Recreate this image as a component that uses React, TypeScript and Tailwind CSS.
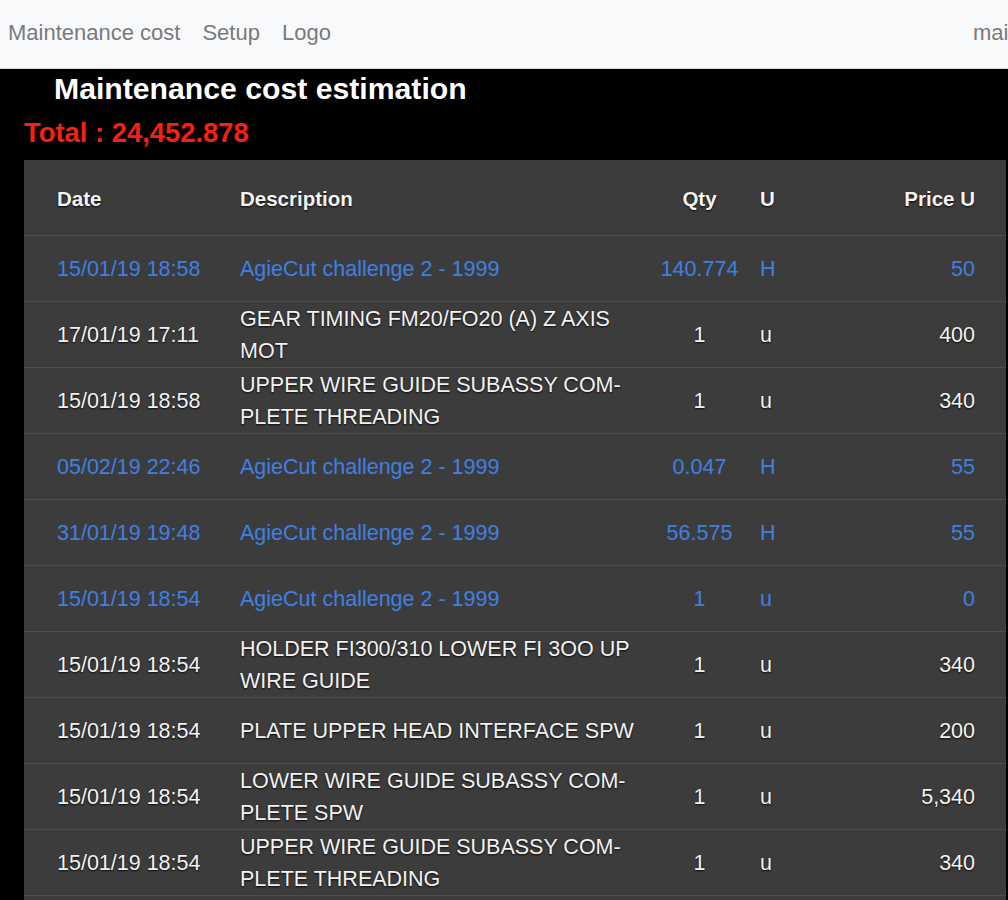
import React from "react";

type Row = {
  date: string;
  desc: React.ReactNode;
  qty: string;
  u: string;
  price: string;
  blue?: boolean;
};

const rows: Row[] = [
  { date: "15/01/19 18:58", desc: "AgieCut challenge 2 - 1999", qty: "140.774", u: "H", price: "50", blue: true },
  { date: "17/01/19 17:11", desc: "GEAR TIMING FM20/FO20 (A) Z AXIS MOT", qty: "1", u: "u", price: "400" },
  { date: "15/01/19 18:58", desc: "UPPER WIRE GUIDE SUBASSY COM\u00ADPLETE THREADING", qty: "1", u: "u", price: "340" },
  { date: "05/02/19 22:46", desc: "AgieCut challenge 2 - 1999", qty: "0.047", u: "H", price: "55", blue: true },
  { date: "31/01/19 19:48", desc: "AgieCut challenge 2 - 1999", qty: "56.575", u: "H", price: "55", blue: true },
  { date: "15/01/19 18:54", desc: "AgieCut challenge 2 - 1999", qty: "1", u: "u", price: "0", blue: true },
  { date: "15/01/19 18:54", desc: "HOLDER FI300/310 LOWER FI 3OO UP WIRE GUIDE", qty: "1", u: "u", price: "340" },
  { date: "15/01/19 18:54", desc: "PLATE UPPER HEAD INTERFACE SPW", qty: "1", u: "u", price: "200" },
  { date: "15/01/19 18:54", desc: "LOWER WIRE GUIDE SUBASSY COM\u00ADPLETE SPW", qty: "1", u: "u", price: "5,340" },
  { date: "15/01/19 18:54", desc: "UPPER WIRE GUIDE SUBASSY COM\u00ADPLETE THREADING", qty: "1", u: "u", price: "340" },
];

const grid = "grid grid-cols-[200px_436px_79px_120px_1fr] items-center";

export default function App() {
  return (
    <div className="min-h-[900px] bg-black font-['Liberation_Sans',Arial,sans-serif]">
      <nav className="flex h-[69px] items-center border-b border-[#d4d4d4] bg-[#f8f9fa] pb-[4px] pl-2 text-[22px] text-[#7a7a7b] overflow-hidden">
        <div className="flex items-center gap-[22px] whitespace-nowrap">
          <span>Maintenance cost</span>
          <span>Setup</span>
          <span>Logo</span>
        </div>
        <div className="ml-auto w-[35px] shrink-0 overflow-hidden whitespace-nowrap">maintenance</div>
      </nav>

      <h1 className="pl-[54px] pt-[2px] text-[30.2px] font-bold leading-[36px] text-white">
        Maintenance cost estimation
      </h1>
      <div className="mt-[10px] pl-[24px] text-[27.4px] font-bold leading-[32px] text-[#f8210f]">
        Total : 24,452.878
      </div>

      <div className="ml-[24px] mr-[2px] mt-[11px] bg-[#3c3c3c] pb-6">
        <div
          className={`${grid} h-[76px] border-b border-[#4e4e4e] pt-[4px] text-[20.5px] font-bold text-[#f4f4f4] [text-shadow:0_1px_2px_rgba(0,0,0,0.9)]`}
        >
          <div className="pl-[33px]">Date</div>
          <div className="pl-[16px]">Description</div>
          <div className="text-center">Qty</div>
          <div className="pl-[21px]">U</div>
          <div className="pr-[31px] text-right">Price U</div>
        </div>

        {rows.map((r, i) => (
          <div
            key={i}
            className={`${grid} h-[66px] border-b border-[#4e4e4e] pt-[1px] text-[21.5px] leading-[32px] ${
              r.blue
                ? "text-[#3f80e4]"
                : "text-[#f2f2f2] [text-shadow:0_1px_2px_rgba(0,0,0,0.85)]"
            }`}
          >
            <div className="pl-[33px] whitespace-nowrap">{r.date}</div>
            <div className="pl-[16px] pr-[4px]">{r.desc}</div>
            <div className="text-center whitespace-nowrap">{r.qty}</div>
            <div className="pl-[21px]">{r.u}</div>
            <div className="pr-[31px] text-right">{r.price}</div>
          </div>
        ))}
      </div>
    </div>
  );
}
